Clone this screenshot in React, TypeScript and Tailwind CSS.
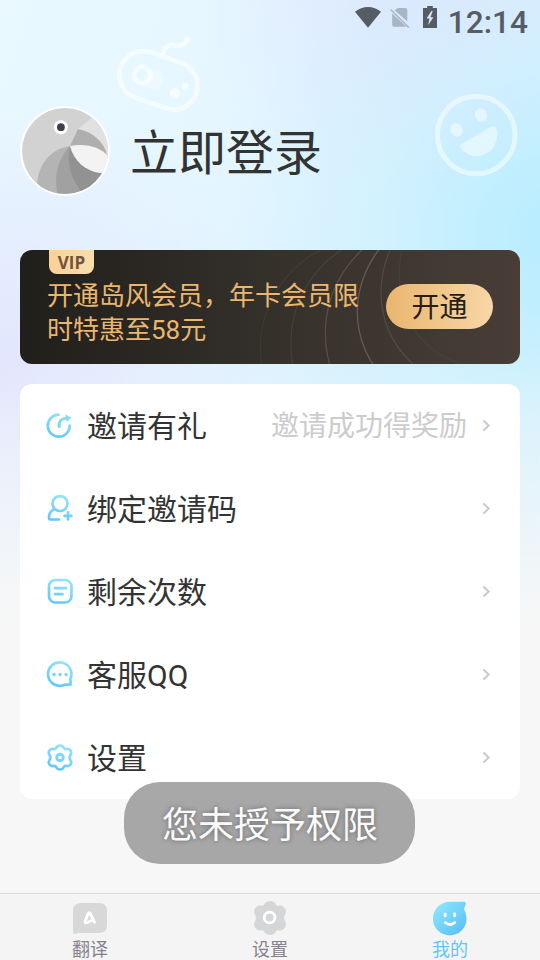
import type { ReactNode } from 'react';

function Gamepad() {
  return (
    <svg className="absolute left-[112px] top-[32px]" width="94" height="84" viewBox="112 32 94 84" fill="none" stroke="#fff" strokeOpacity=".58" strokeLinecap="round">
      <path d="M152 52.5 181 62.8C191 66.5 197.500 75 197.500 86C197.500 101 183 113.500 166 108.200L134 97C125 93 119.500 85 119.500 75C119.500 58 136 47.500 152 52.500Z" strokeWidth="4.800" />
      <path d="M163 53C165 47 169 43.500 175 45.500C182 46.500 185 45 187.500 38.500" strokeWidth="5" />
      <circle cx="142.500" cy="75" r="8.200" strokeWidth="4.800" />
      <g fill="#fff" stroke="none">
        <circle cx="154" cy="79" r="10.300" fillOpacity=".3" />
        <circle cx="174.700" cy="93.300" r="5" fillOpacity=".68" />
        <circle cx="185" cy="86.500" r="3.400" fillOpacity=".68" />
      </g>
    </svg>
  );
}

function BigSmile() {
  return (
    <svg className="absolute left-[434px] top-[93px]" width="84" height="84" viewBox="0 0 84 84" fill="#fff" fillOpacity=".48">
      <circle cx="42.200" cy="42" r="38.800" fill="none" stroke="#fff" strokeOpacity=".5" strokeWidth="5" />
      <ellipse cx="22.500" cy="36.700" rx="6" ry="7" transform="rotate(-25 22.500 36.700)" />
      <ellipse cx="47" cy="22" rx="6" ry="7" transform="rotate(-25 47 22)" />
      <path d="M27.500 51 57 34Q63 32 63.200 40C63.500 53 56 61.500 45 63C38 64 31 60.500 27 55.500Q25.500 52.800 27.500 51Z" />
    </svg>
  );
}

function StatusBar() {
  return (
    <div className="flex h-[46px] items-start justify-end pr-[12px] text-[#575c64]">
      <svg className="mr-[9px] mt-[7px]" width="26" height="21" viewBox="0 0 26 21" fill="currentColor">
        <path d="M0 4.800C7.500-1.600 18.500-1.600 26 4.800L13 20.800Z" />
      </svg>
      <svg className="mr-[13px] mt-[7px]" width="20" height="22" viewBox="0 0 20 22">
        <path d="M7.500 1H15.500Q17.300 1 17.300 3V14.500L4.800 3.500ZM2.200 6.500 16.500 19.800H4Q2.200 19.800 2.200 18Z" fill="#a9b5c5" />
        <path d="M.6 2.500 18.800 20.500" stroke="#a9b5c5" strokeWidth="1.600" />
      </svg>
      <svg className="mr-[11px] mt-[6px]" width="14" height="22" viewBox="0 0 14 22">
        <path d="M4.200 0H9.800V2H14V22H0V2H4.200Z" fill="currentColor" />
        <path d="M8.400 5 3.600 12.500H6.500L5.200 19 10.400 11.200H7.400L9.800 5Z" fill="#dce8fb" />
      </svg>
      <span className="mt-[7px] font-[Roboto] text-[31.6px] font-medium leading-[32px]">12:14</span>
    </div>
  );
}

function Avatar() {
  return (
    <svg className="shrink-0" width="90" height="90" viewBox="0 0 90 90">
      <defs><clipPath id="avatar"><circle cx="45" cy="45" r="43" /></clipPath></defs>
      <circle cx="45" cy="45" r="45" fill="#fff" />
      <g clipPath="url(#avatar)">
        <rect width="90" height="90" fill="#d2d2d2" />
        <path d="M50 40C31 43 18 57 17 80L35 94 60 65Z" fill="#b4b4b4" />
        <path d="M50 40C38 53 33 69 38 90H70L75 65Z" fill="#a1a1a1" />
        <path d="M50 40C46 60 52 77 67 91L92 70 80 66Z" fill="#929292" />
        <path d="M58 23 73 11 91 20V48L86 49Z" fill="#e1e1e1" />
        <path d="M50 40 58 23C72 26 84 35 87 49Z" fill="#afafaf" />
        <path d="M50 40C66 37 80 41 88 50V66L80 67C65 65 54 55 50 40Z" fill="#f3f3f3" />
      </g>
      <circle cx="40.900" cy="21.200" r="7" fill="#fff" />
      <circle cx="40.900" cy="21.200" r="3.900" fill="#40404c" />
    </svg>
  );
}

function VipCard() {
  return (
    <section className="relative mx-5 flex h-[114px] overflow-hidden rounded-[12px] bg-[linear-gradient(90deg,#211f1b_0%,#34302a_50%,#403933_80%,#493d36_100%)]">
      <svg className="absolute inset-0" width="500" height="114" viewBox="20 250 500 114" fill="none" stroke="#a59482" strokeWidth="1.300">
        <path d="M325 248C283 267 253 315 262 366" opacity=".1" />
        <path d="M344 248C300 277 285 322 293 366" opacity=".15" />
        <path d="M364 248C327 282 319 326 330 366" opacity=".28" />
        <path d="M380 248C352 285 350 329 374 366" opacity=".4" />
        <path d="M391 248C371 293 382 337 415 366" opacity=".2" />
        <path d="M402 248C391 306 414 352 468 366" opacity=".08" />
      </svg>
      <span className="absolute left-[29px] top-0 h-[24px] w-[45px] rounded-b-[8px] bg-linear-to-r from-[#ffd099] to-[#f8deac] text-center font-['Open_Sans'] text-[17px] font-bold leading-[25px] text-[#70543b]">VIP</span>
      <p className="relative ml-[27px] mt-[29px] w-[314px] text-[26px] leading-[34px] text-[#ebb66f]">开通岛风会员，年卡会员限时特惠至58元</p>
      <button className="relative ml-[25px] mt-[34px] h-[45px] w-[107px] rounded-full bg-linear-to-r from-[#e9b66f] to-[#f8d6a6] pt-[2px] text-[28px] leading-[43px] text-[#251f19]">开通</button>
    </section>
  );
}

function MenuIcon({ children }: { children: ReactNode }) {
  return (
    <svg className="shrink-0" width="28" height="28" viewBox="0 0 28 28" fill="none" stroke="url(#sky)" strokeWidth="2.700" strokeLinecap="round" strokeLinejoin="round">
      <defs>
        <linearGradient id="sky" gradientUnits="userSpaceOnUse" x1="19" y1="2" x2="10" y2="27">
          <stop stopColor="#93e2fd" />
          <stop offset="1" stopColor="#5fc7fa" />
        </linearGradient>
      </defs>
      {children}
    </svg>
  );
}

const gear = 'M14 2C16 2 17.300 3.300 18 4.800C18.600 5.600 19.600 5.800 21 5.500C23.500 5 26 7.800 25 10.200C24.400 11.500 23.600 12.700 23.600 14S24.400 16.500 25 17.800C26 20.200 23.500 23 21 22.500C19.600 22.200 18.600 22.400 18 23.200C17.300 24.700 16 26 14 26S10.700 24.700 10 23.200C9.400 22.400 8.400 22.200 7 22.500C4.500 23 2 20.200 3 17.800C3.600 16.500 4.400 15.300 4.400 14S3.600 11.500 3 10.200C2 7.800 4.500 5 7 5.500C8.400 5.800 9.400 5.600 10 4.800C10.700 3.300 12 2 14 2Z';

const rows: { label: string; hint?: string; icon: ReactNode }[] = [
  { label: '邀请有礼', hint: '邀请成功得奖励', icon: <><path d="M12.500 2.700A11 11 0 1 0 23.800 13.500" /><path d="M13.200 14.500C12.700 9.500 15 6.500 20.500 6.300" strokeWidth="3" /><path d="M19.300 2.500 25.300 5.700 20.600 10.100Z" fill="#85dafc" stroke="none" /></> },
  { label: '绑定邀请码', icon: <><circle cx="14" cy="8.600" r="7.500" /><path d="M8.500 14.300C4.800 15.500 3 18.200 3 22.500Q3 24.500 5 24.500H13M18.500 20.800H25.500M22 17.300V24.300" /></> },
  { label: '剩余次数', icon: <><rect x="3" y="2" width="22.500" height="22.500" rx="6.500" /><path d="M9 10.200H20M9 16.200H16.500" /></> },
  { label: '客服QQ', icon: <><path d="M24.300 18A11.700 11.700 0 1 0 18.500 23.700H24Q24.900 23.700 24.700 22.200Z" /><path d="M8 13.500H8.100M14 13.500H14.100M20 13.500H20.100" strokeWidth="3.500" /></> },
  { label: '设置', icon: <g transform="translate(0 -.5)"><path d={gear} /><circle cx="14" cy="14" r="3.300" strokeWidth="2.900" /></g> },
];

function BottomBar() {
  return (
    <nav className="grid h-[67px] grid-cols-3 border-t border-[#dadada] bg-[#f4f4f4] text-[18px] leading-[24px] text-[#85828f]">
      <div className="flex flex-col items-center gap-[2px] pt-[6px]">
        <svg width="36" height="36" viewBox="0 0 36 36">
          <path d="M9 3H27Q35 3 35 11V25Q35 33 27 33H8Q5 33 3 34Q1 34.500 1 32V11Q1 3 9 3Z" fill="#d8d8d8" />
          <path d="M22.500 22.300 18.500 14Q17.200 11.400 16 14L13.200 21Q12.700 23.500 14.700 22.700L20.500 20" fill="none" stroke="#fff" strokeWidth="2.900" strokeLinecap="round" strokeLinejoin="round" />
        </svg>
        <span>翻译</span>
      </div>
      <div className="flex flex-col items-center gap-[2px] pt-[6px]">
        <svg width="36" height="36" viewBox="0 0 28 28">
          <path d={gear} fill="#d5d6d8" stroke="#d5d6d8" strokeWidth="2.300" />
          <circle cx="13.700" cy="13.600" r="4.200" fill="none" stroke="#fff" strokeWidth="2.200" />
        </svg>
        <span>设置</span>
      </div>
      <div className="flex flex-col items-center gap-[2px] pt-[6px] text-[#5ec7f9]">
        <svg width="36" height="36" viewBox="0 0 36 36">
          <defs><linearGradient id="mine" x1="0" y1="0" x2="1" y2="1"><stop stopColor="#93e9fd" /><stop offset="1" stopColor="#53bdf8" /></linearGradient></defs>
          <path d="M18 1.800H32Q34.500 1.800 33.500 5L32 9Q34.500 13 34.500 18.500A16.800 16.800 0 1 1 18 1.800Z" fill="url(#mine)" />
          <path d="M13.200 14V15.700M22.700 14V15.700" stroke="#fff" strokeWidth="2.900" strokeLinecap="round" />
          <path d="M13.200 22.500Q18 26.500 22.800 22.500" stroke="#fff" strokeWidth="2.700" fill="none" strokeLinecap="round" />
        </svg>
        <span>我的</span>
      </div>
    </nav>
  );
}

export default function App() {
  return (
    <div className="relative flex h-[960px] w-[540px] flex-col overflow-hidden bg-[linear-gradient(180deg,#f7f7f700_350px,#f7f7f7_630px),radial-gradient(circle_at_560px_235px,#b6ecff_0px,#bceeffd0_80px,#c9f1ff80_180px,#d4f4ff00_330px),radial-gradient(circle_at_0px_375px,#e2e5fd_0px,#e2e7fd00_280px),radial-gradient(circle_at_430px_-20px,#dfe5fe_0px,#dce8fe00_230px),linear-gradient(110deg,#e9f9ff_0px,#e5f6ff_240px,#d9f1fd_480px)] font-[Roboto,'Noto_Sans_CJK_SC',sans-serif] text-[#333]">
      <Gamepad />
      <BigSmile />
      <StatusBar />
      <header className="relative mb-[54px] mt-[60px] flex h-[90px] items-center pl-5">
        <Avatar />
        <h1 className="ml-[20px] pt-[6px] text-[48px] leading-[60px]">立即登录</h1>
      </header>
      <VipCard />
      <main className="mx-5 mt-5 h-[415px] rounded-[12px] bg-white">
        {rows.map((row) => (
          <div key={row.label} className="flex h-[83px] items-center pl-[26px] pr-[28px]">
            <MenuIcon>{row.icon}</MenuIcon>
            <span className="ml-[13px] pt-[3px] text-[30px] leading-[40px]">{row.label}</span>
            <span className="ml-auto mr-[15px] pt-[3px] text-[28px] leading-[40px] text-[#ccc]">{row.hint}</span>
            <svg width="10" height="14" viewBox="0 0 10 14" fill="none" stroke="#c9c9ce" strokeWidth="1.900"><path d="M1.500 1.500 6.700 6.500 1.500 11.500" /></svg>
          </div>
        ))}
      </main>
      <div className="mt-auto"><BottomBar /></div>
      <div className="absolute left-[124px] top-[782px] flex h-[82px] w-[291px] items-center justify-center rounded-[36px] bg-[#999999d9] pl-[1px] pt-[5px] text-[36px] leading-[48px] text-[#fafafa] [text-shadow:0_0_5px_#0006]">您未授予权限</div>
    </div>
  );
}
